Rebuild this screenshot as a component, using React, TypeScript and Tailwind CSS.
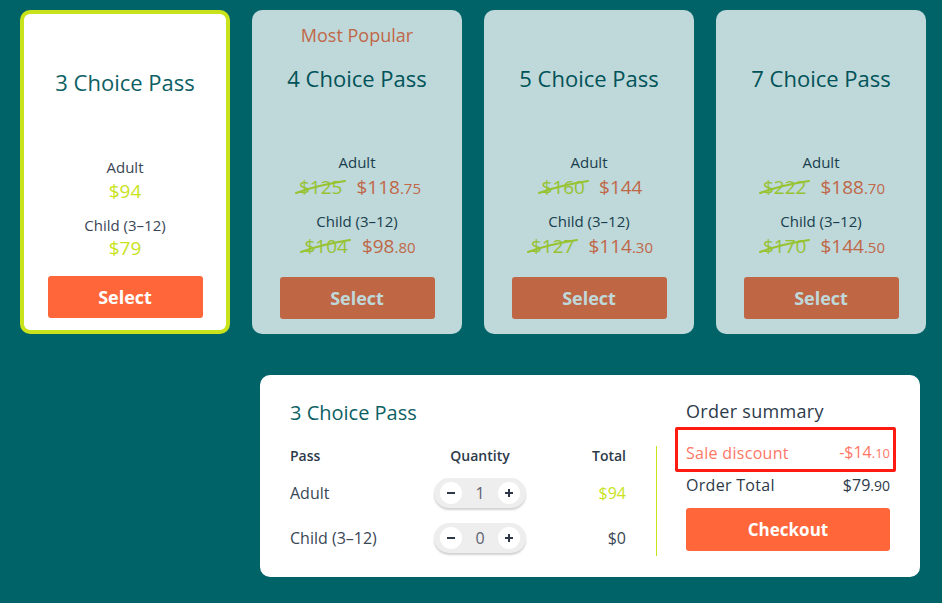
import React from "react";

const font = { fontFamily: '"Open Sans", "Liberation Sans", sans-serif' };

function Strike({ children }: { children: React.ReactNode }) {
  return (
    <span className="relative inline-block text-[#c8e31c]">
      {children}
      <svg className="absolute left-[-4px] top-[2px] h-[20px] w-[52px]" viewBox="0 0 52 20" fill="none">
        <path d="M1 17 C 12 13, 30 8, 50 5" stroke="#c8e31c" strokeWidth="2" strokeLinecap="round" />
      </svg>
    </span>
  );
}

function Price({ dollars, cents }: { dollars: string; cents?: string }) {
  return (
    <span className="text-[#ff6a3d]">
      <span className="text-[19px]">${dollars}</span>
      {cents ? <span className="text-[15px]">.{cents}</span> : null}
    </span>
  );
}

type Card = {
  title: string;
  popular?: boolean;
  adultOld: string;
  adult: [string, string?];
  childOld: string;
  child: [string, string?];
};

const cards: Card[] = [
  { title: "4 Choice Pass", popular: true, adultOld: "$125", adult: ["118", "75"], childOld: "$104", child: ["98", "80"] },
  { title: "5 Choice Pass", adultOld: "$160", adult: ["144"], childOld: "$127", child: ["114", "30"] },
  { title: "7 Choice Pass", adultOld: "$222", adult: ["188", "70"], childOld: "$170", child: ["144", "50"] },
];

function Stepper({ value }: { value: number }) {
  return (
    <div className="flex h-[30px] w-[92px] items-center justify-between rounded-full bg-[#eeeeee] px-[6px] shadow-[0_2px_2px_rgba(0,0,0,0.18)]">
      <span className="flex h-[22px] w-[22px] items-center justify-center rounded-full bg-white">
        <svg width="10" height="10" viewBox="0 0 10 10"><path d="M1 5h8" stroke="#2d3748" strokeWidth="2" /></svg>
      </span>
      <span className="text-[16px] text-[#5b6270]">{value}</span>
      <span className="flex h-[22px] w-[22px] items-center justify-center rounded-full bg-white">
        <svg width="10" height="10" viewBox="0 0 10 10"><path d="M1 5h8M5 1v8" stroke="#2d3748" strokeWidth="2" /></svg>
      </span>
    </div>
  );
}

export default function App() {
  return (
    <div className="h-[603px] w-[942px] overflow-hidden bg-[#006368] pl-[20px] pt-[10px]" style={font}>
      <div className="flex gap-[22px]">
        {/* Selected card */}
        <div className="flex h-[324px] w-[210px] flex-col items-center rounded-[10px] border-4 border-[#c8e31c] bg-white pb-[12px] pt-[13px]">
          <div className="h-[26px]" />
          <div className="mt-[14px] text-[22px] leading-[30px] text-[#0d5f64]">3 Choice Pass</div>
          <div className="mt-[60px] text-[15px] leading-[20px] text-[#3a4656]">Adult</div>
          <div className="mt-[1px] text-[19px] leading-[26px] text-[#c8e31c]">$94</div>
          <div className="mt-[11px] text-[15px] leading-[20px] text-[#3a4656]">Child (3–12)</div>
          <div className="mt-[0px] text-[19px] leading-[26px] text-[#c8e31c]">$79</div>
          <button className="mt-auto h-[42px] w-[155px] rounded-[3px] bg-[#ff673a] text-[18px] font-bold text-white">Select</button>
        </div>
        {cards.map((c) => (
          <div key={c.title} className="flex h-[324px] w-[210px] flex-col items-center rounded-[10px] bg-white pb-[15px] pt-[12px] opacity-75">
            <div className="h-[26px] text-[18px] leading-[26px] text-[#ff6a3d]">{c.popular ? "Most Popular" : ""}</div>
            <div className="mt-[15px] text-[22px] leading-[30px] text-[#004e53]">{c.title}</div>
            <div className="mt-[59px] text-[15px] leading-[20px] text-[#1f3344]">Adult</div>
            <div className="mt-[2px] flex items-baseline gap-[14px] pl-[6px] leading-[26px]">
              <span className="text-[19px]"><Strike>{c.adultOld}</Strike></span>
              <Price dollars={c.adult[0]} cents={c.adult[1]} />
            </div>
            <div className="mt-[10px] text-[15px] leading-[20px] text-[#1f3344]">Child (3–12)</div>
            <div className="mt-[2px] flex items-baseline gap-[14px] pl-[6px] leading-[26px]">
              <span className="text-[19px]"><Strike>{c.childOld}</Strike></span>
              <Price dollars={c.child[0]} cents={c.child[1]} />
            </div>
            <button className="mt-auto h-[42px] w-[155px] rounded-[3px] bg-[#ff673a] text-[18px] font-bold text-white">Select</button>
          </div>
        ))}
      </div>

      <div className="ml-[240px] mt-[41px] flex h-[202px] w-[660px] rounded-[10px] bg-white px-[30px]">
        <div className="w-[336px] pt-[25px]">
          <div className="text-[20px] leading-[26px] text-[#0d5f64]">3 Choice Pass</div>
          <div className="mt-[20px] grid grid-cols-[120px_140px_76px] items-center text-[14px] font-semibold leading-[20px] text-[#2d3a4a]">
            <div>Pass</div>
            <div className="text-center">Quantity</div>
            <div className="text-right">Total</div>
          </div>
          <div className="mt-[12px] grid h-[30px] grid-cols-[120px_140px_76px] items-center text-[16px] text-[#3a4656]">
            <div>Adult</div>
            <div className="flex justify-center"><Stepper value={1} /></div>
            <div className="text-right text-[#c8e31c]">$94</div>
          </div>
          <div className="mt-[15px] grid h-[30px] grid-cols-[120px_140px_76px] items-center text-[16px] text-[#3a4656]">
            <div>Child (3–12)</div>
            <div className="flex justify-center"><Stepper value={0} /></div>
            <div className="text-right">$0</div>
          </div>
        </div>
        <div className="ml-[30px] mt-[71px] h-[110px] w-px bg-[#c8e31c]" />
        <div className="ml-[29px] flex w-[204px] flex-col pt-[23px]">
          <div className="text-[18px] leading-[26px] tracking-[0.3px] text-[#2d3a4a]">Order summary</div>
          <div className="-ml-[11px] -mr-[6px] mt-[3px] flex h-[45px] items-end justify-between rounded-[2px] border-[3px] border-[#ff1a12] pb-[5px] pl-[8px] pr-[3px] text-[16px] leading-[22px] text-[#ff7766]">
            <span className="tracking-[0.3px]">Sale discount</span>
            <span>-$14<span className="text-[13px]">.10</span></span>
          </div>
          <div className="mt-[2px] flex justify-between text-[16px] leading-[22px] text-[#2d3a4a]">
            <span className="tracking-[0.3px]">Order Total</span>
            <span>$79<span className="text-[14px]">.90</span></span>
          </div>
          <button className="mt-[11px] h-[43px] w-full rounded-[3px] bg-[#ff673a] text-[17px] font-bold text-white">Checkout</button>
        </div>
      </div>
    </div>
  );
}
